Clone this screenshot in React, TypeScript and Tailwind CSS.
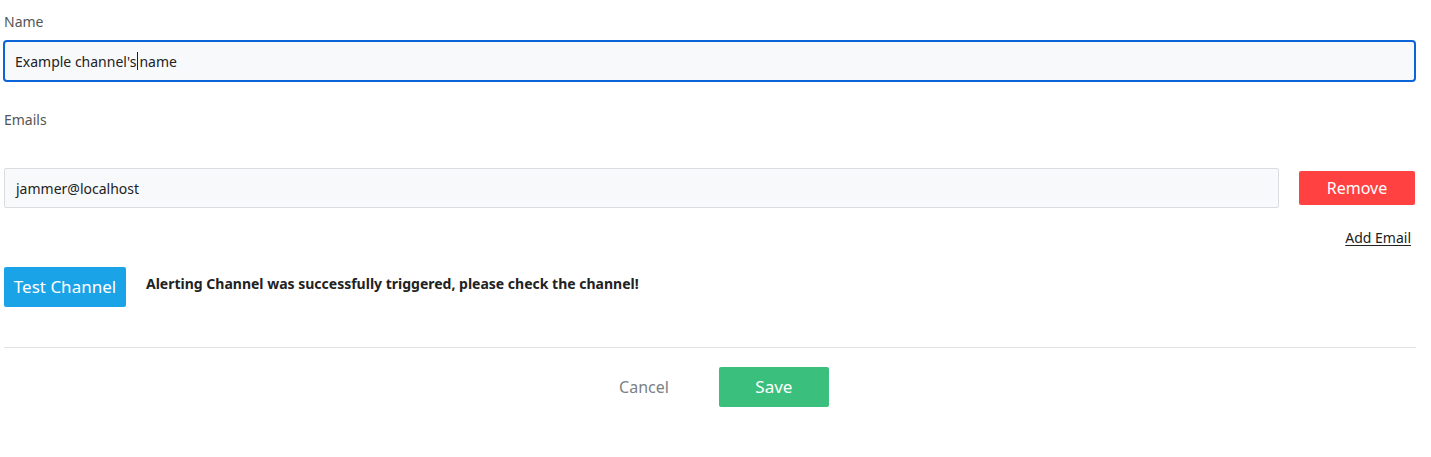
import React from "react";

export default function App() {
  return (
    <div className="min-h-screen bg-white font-['Noto_Sans',sans-serif] text-[#212529]">
      <div className="pl-1 pr-[15px] pt-[12px]">
        <label className="block text-[14px] leading-5 text-[#555]">Name</label>
        <div className="mt-2 h-[42px] -ml-px rounded-[4px] border-2 border-[#0b64d8] bg-[#f8f9fb] px-[10px] flex items-center">
          <span className="text-[14px] text-[#222]">Example channel's</span>
          <span className="mx-[1px] inline-block h-[18px] w-px bg-[#222]" />
          <span className="text-[14px] text-[#222]">name</span>
        </div>

        <label className="mt-[28px] block text-[14px] leading-5 text-[#555]">Emails</label>

        <div className="mt-[38px] mr-px flex items-center gap-[20px]">
          <div className="flex h-10 flex-1 items-center rounded-[2px] border border-[#dadcdf] bg-[#f8f9fb] px-[11px] text-[14px] text-[#222]">
            jammer@localhost
          </div>
          <button className="h-[34px] w-[116px] rounded-[2px] bg-[#ff4141] text-[16px] text-white">
            Remove
          </button>
        </div>

        <div className="mt-[20px] flex justify-end pr-[5px]">
          <a className="text-[14px] leading-5 text-[#222] underline underline-offset-2">Add Email</a>
        </div>

        <div className="mt-[19px] flex items-center gap-5">
          <button className="h-10 w-[122px] rounded-[2px] bg-[#1aa3e6] text-[17px] text-white">
            Test Channel
          </button>
          <span className="-mt-[8px] text-[14px] font-bold text-[#222]">
            Alerting Channel was successfully triggered, please check the channel!
          </span>
        </div>

        <div className="mt-10 border-t border-[#e3e3e3]" />

        <div className="mt-[19px] flex items-center justify-center gap-[50px] pl-[28px]">
          <button className="text-[16px] text-[#7b7f85]">Cancel</button>
          <button className="h-10 w-[110px] rounded-[2px] bg-[#3abf7c] text-[17px] text-white">
            Save
          </button>
        </div>
      </div>
    </div>
  );
}
